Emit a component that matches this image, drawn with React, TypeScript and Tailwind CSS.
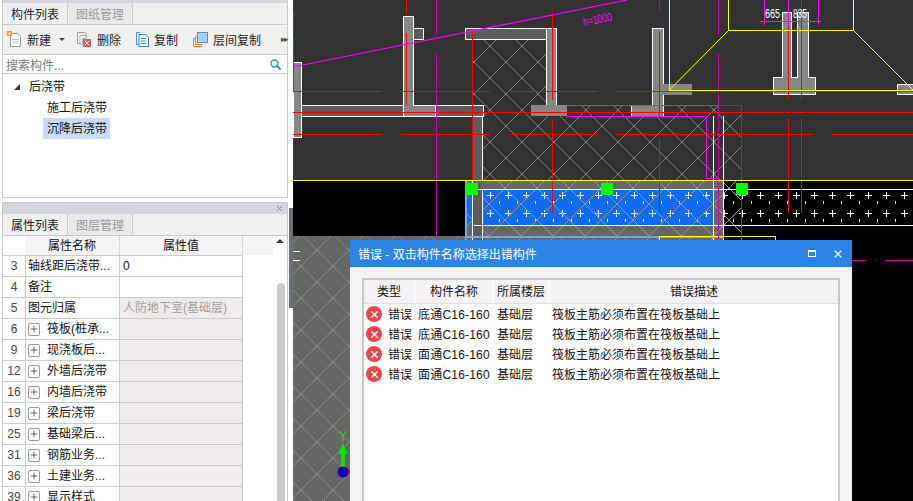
import { Plus, X } from "lucide-react";

const props = [
  { n: "3", name: "轴线距后浇带...", value: "0" },
  { n: "4", name: "备注", value: "" },
  { n: "5", name: "图元归属", value: "人防地下室(基础层)", muted: true },
  { n: "6", name: "筏板(桩承...", group: true },
  { n: "9", name: "现浇板后...", group: true },
  { n: "12", name: "外墙后浇带", group: true },
  { n: "16", name: "内墙后浇带", group: true },
  { n: "19", name: "梁后浇带", group: true },
  { n: "25", name: "基础梁后...", group: true },
  { n: "31", name: "钢筋业务...", group: true },
  { n: "36", name: "土建业务...", group: true },
  { n: "39", name: "显示样式", group: true },
];

const errors = ["底通C16-160", "底通C16-160", "面通C16-160", "面通C16-160"];

function NewIcon() {
  return (
    <svg width="15" height="17" viewBox="0 0 15 17" fill="none">
      <path d="M3.5 2.5h7l3 3v10h-10z" fill="#fff" stroke="#8d98a0" />
      <path d="M5.5 8.5h6M5.5 11h6" stroke="#b5bcc2" />
      <rect x="0" y="0" width="5" height="5" fill="#f59a23" />
      <path d="M1 2.5h3M2.5 1v3" stroke="#ffe0a8" />
    </svg>
  );
}

function DeleteIcon() {
  return (
    <svg width="15" height="15" viewBox="0 0 15 15" fill="none">
      <path d="M.5 .5h7l2 2v3M.5 .5v11h4" stroke="#9a9fa3" />
      <path d="M3 3.5h6v3H5.5v6H3z" fill="#fff" stroke="#b4b8bb" />
      <rect x="6" y="7" width="8" height="8" fill="#db5a5f" />
      <path d="M8 9l4 4M12 9l-4 4" stroke="#fff" />
    </svg>
  );
}

function CopyIcon() {
  return (
    <svg width="13" height="15" viewBox="0 0 13 15" fill="none">
      <path d="M.5 .5h3v1M.5 .5v12h2" stroke="#4a90d9" />
      <path d="M3 2.5h6l3.500 3v9H3z" fill="#fff" stroke="#2f86d8" />
      <path d="M5 6.500h5M5 9h5M5 11.500h5" stroke="#2f86d8" />
    </svg>
  );
}

function LayerIcon() {
  return (
    <svg width="15" height="15" viewBox="0 0 15 15" fill="none">
      <path d="M.5 14.500v-8h2M.5 14.500h8v-1M2.500 12.500v-8h1M2.500 12.500h7" stroke="#ee7b1c" />
      <rect x="4.500" y=".5" width="10" height="10" fill="#a9d0f7" stroke="#4a90d9" />
    </svg>
  );
}

function ToolButton({ w, icon, label }: { w: string; icon: React.ReactNode; label: string }) {
  return (
    <div className={`flex items-center gap-[5px] shrink-0 ${w}`}>
      {icon}
      <span className="whitespace-nowrap pt-[2px]">{label}</span>
    </div>
  );
}

function Tabs({ first, second }: { first: string; second: string }) {
  return (
    <div className="flex h-[22px] bg-[#f0f0f0] border-b border-[#c6cacc] text-[#222]">
      <div className="w-[65px] flex items-center justify-center pt-[2px] border-r border-[#c6cacc]">{first}</div>
      <div className="w-[65px] flex items-center justify-center pt-[2px] bg-[#ebe8ea] text-[#9a9a9a] border-r border-[#c6cacc]">
        {second}
      </div>
    </div>
  );
}

function CadCanvas() {
  return (
    <svg className="absolute inset-0" width="620" height="501" viewBox="293 0 620 501" shapeRendering="crispEdges">
      <defs>
        <pattern id="hatch" width="32" height="32" patternUnits="userSpaceOnUse" patternTransform="translate(506 30)">
          <path d="M0 0L32 32M32 0L0 32" stroke="#7f7f7f" fill="none" />
        </pattern>
        <pattern id="hatchBand" width="32" height="32" patternUnits="userSpaceOnUse" patternTransform="translate(585 204)">
          <path d="M0 0L32 32M32 0L0 32" stroke="#9c9484" fill="none" />
        </pattern>
        <pattern id="hatchLow" width="32" height="32" patternUnits="userSpaceOnUse" patternTransform="translate(317 410)">
          <path d="M0 0L32 32M32 0L0 32" stroke="#858785" fill="none" />
        </pattern>
        <pattern id="plus" width="18" height="18" patternUnits="userSpaceOnUse" patternTransform="translate(482 186)">
          <path d="M5 9h7M8.500 5.500v7M-4 18h7M-.5 14.500v7M14 18h7M17.500 14.500v7" stroke="#fff" fill="none" />
        </pattern>
      </defs>

      <rect x="293" y="0" width="620" height="181" fill="#333333" />
      <rect x="293" y="181" width="620" height="320" fill="#000" />
      <rect x="293" y="236" width="560" height="265" fill="#666865" />
      <rect x="293" y="236" width="560" height="265" fill="url(#hatchLow)" />
      <rect x="293" y="181" width="172" height="55" fill="#000" />
      <rect x="724" y="236" width="189" height="265" fill="#000" />

      {/* upper hatch */}
      <path d="M473 39H546V105H741V181H473Z" fill="url(#hatch)" />

      {/* walls */}
      <g stroke="#fff" strokeWidth="1">
        <path d="M293 62.500H301.500V137.500H293Z" fill="#858785" />
        <path d="M301 105.500H483V116.500H301Z" fill="#5c5c5c" />
        <path d="M413 28.500H423.500V39.500H413Z" fill="#5c5c5c" />
        <path d="M465.500 28.500H556V39.500H465.500Z" fill="#5c5c5c" />
        <path d="M472.500 116.500H482.500V181H472.500Z" fill="#5c5c5c" />
        <path d="M403 116.500V16.500H413.500V105.500H435V116.500Z" fill="#858785" />
        <path d="M546.500 105V28.500H556.500V105" fill="#858785" />
      </g>
      <rect x="531" y="105" width="36" height="11" fill="#858785" />
      <path d="M652.500 105V28.500H663.500V116.500H631V105H652.500Z" fill="#858785" stroke="#fff" />
      <rect x="663" y="84" width="29" height="11" fill="#858785" />
      <path d="M782 77V12.500H791.500V77H797V12.500H808V77H815.500V94.500H773.500V77Z" fill="#858785" stroke="#fff" />
      <path d="M913 84.500H897.500V94.500H913" fill="#858785" stroke="#fff" />

      {/* band under the slab */}
      <rect x="466" y="181" width="258" height="55" fill="#666865" />
      <rect x="482" y="190" width="231" height="35" fill="#116bf5" />
      <rect x="482" y="190" width="231" height="35" fill="url(#plus)" />
      <rect x="467" y="190" width="6" height="35" fill="#116bf5" />
      <rect x="724" y="190" width="189" height="35" fill="url(#plus)" />
      <rect x="466" y="181" width="275" height="55" fill="url(#hatchBand)" />
      <rect x="473" y="181" width="9" height="59" fill="#5c5c5c" />
      <path d="M473.500 189.500H913M473.500 225.500H913M482.500 189V240M472.500 181V240M713.500 116V240M723.500 116V240" stroke="#fff" fill="none" />
      <path d="M466 181V240M466 236.500H724" stroke="#78a5f0" strokeWidth="2" fill="none" />
      <path d="M659.500 240V236.500H775.500V240" stroke="#ffff00" fill="none" />

      {/* red axes */}
      <g stroke="#ff0000" fill="none">
        <path d="M293.500 12V91M293 91.500H382M400 91.500H490M508 91.500H598M616 91.500H913" />
        <path d="M293 112.500H913" />
        <path d="M293 134.500H382M401 134.500H490M509 134.500H598M617 134.500H813M832 134.500H913" />
        <path d="M406.500 0V14M406.500 33V105M472.500 30V180" />
        <path d="M552.500 12V100M552.500 119V213" />
        <path d="M659.500 0V12M659.500 32V118M659.500 139V213" />
        <path d="M788.500 0V100M788.500 119V213M801.500 0V100M801.500 119V213" />
        <path d="M718 105.500H741.500V240" />
      </g>

      {/* magenta lines */}
      <g stroke="#ff00ff" fill="none">
        <path d="M293 67L627 0" shapeRendering="auto" strokeWidth="1.200" />
        <path d="M567 105.500H718M567 116.500H706M706.500 116V178.500H718" />
        <path d="M760 21.500H821M764.500 0V25M788.500 0V25M818.500 0V25" />
      </g>
      <g stroke="#cc00aa" fill="none">
        <path d="M436.500 0V35M436.500 53V236M718.500 0V35M718.500 54V240" />
        <path d="M852 260.500H866M875 260.500H876M885 260.500H913" />
      </g>

      {/* yellow outline */}
      <g stroke="#ffff00" fill="none">
        <path d="M293 180.500H913" />
        <path d="M669.500 0V90.500H913M728.500 0V30.500H853.500V0" />
        <path d="M728.500 30.500L669.500 90M853.500 30.500L913 90" shapeRendering="auto" />
      </g>

      {/* grips */}
      <rect x="466" y="183" width="12" height="12" fill="#00ff00" />
      <rect x="601" y="183" width="12" height="12" fill="#00ff00" />
      <rect x="736" y="183" width="12" height="12" fill="#00ff00" />

      <text x="765" y="18" fill="#fff" fontSize="12" textLength="15" lengthAdjust="spacingAndGlyphs" fontFamily="Liberation Sans, sans-serif">665</text>
      <text x="793" y="18" fill="#fff" fontSize="12" textLength="14" lengthAdjust="spacingAndGlyphs" fontFamily="Liberation Sans, sans-serif">835</text>
      <text x="584" y="26" fill="#ff00ff" fontSize="12" textLength="29" lengthAdjust="spacingAndGlyphs" transform="rotate(-11 584 26)" fontFamily="Liberation Sans, sans-serif">h=1000</text>

      <path d="M293 251.500H300M293 260.500H300" stroke="#fff" />

      {/* axis marker */}
      <g shapeRendering="auto">
        <path d="M339.500 431L343 436L346.500 431M343 436V442" stroke="#33dd33" fill="none" />
        <path d="M343 443L348 454H345V467H341V454H338Z" fill="#00e600" />
        <circle cx="348" cy="472" r="2.500" fill="#ff0000" />
        <circle cx="343" cy="472" r="5.500" fill="#0000b8" />
      </g>
    </svg>
  );
}

export default function App() {
  return (
    <div className="relative flex w-[913px] h-[501px] overflow-hidden bg-white text-[12px] leading-none text-[#111] font-['Liberation_Sans','Noto_Sans_CJK_SC',sans-serif]">
      <aside className="relative w-[293px] shrink-0 flex flex-col pl-[2px] pr-[5px] bg-white">
        {/* component list */}
        <section className="h-[198px] shrink-0 flex flex-col border-x border-b border-[#c6cacc]">
          <div className="h-[3px] shrink-0 bg-[#d5d6dd]" />
          <Tabs first="构件列表" second="图纸管理" />
          <div className="h-[30px] shrink-0 flex items-center pl-[4px] bg-[#f0f0ee] border-b border-[#c6cacc] text-[#222]">
            <ToolButton w="w-[52px]" icon={<NewIcon />} label="新建" />
            <span className="w-0 h-0 mr-[12px] border-x-[3px] border-t-[3px] border-x-transparent border-t-[#444]" />
            <ToolButton w="w-[59px]" icon={<DeleteIcon />} label="删除" />
            <ToolButton w="w-[57px]" icon={<CopyIcon />} label="复制" />
            <ToolButton w="w-[88px]" icon={<LayerIcon />} label="层间复制" />
            <span className="text-[9px] tracking-[-2px] text-[#555]">▸▸</span>
          </div>
          <div className="h-[19px] shrink-0 flex items-center justify-between pl-[3px] pr-[6px] border-b border-[#c6cacc] text-[#777]">
            <span className="pt-[3px]">搜索构件...</span>
            <svg width="11" height="11" viewBox="0 0 11 11" fill="none">
              <circle cx="4.500" cy="4.500" r="3.500" stroke="#2b8fc9" strokeWidth="1.400" />
              <path d="M7 7l3.500 3.500" stroke="#2b6f9f" strokeWidth="1.600" />
            </svg>
          </div>
          <div className="flex-1 flex flex-col pt-[2px]">
            <div className="h-[21px] flex items-center pl-[11px] gap-[9px]">
              <svg width="6" height="6" viewBox="0 0 6 6">
                <path d="M6 0V6H0Z" fill="#333" />
              </svg>
              <span>后浇带</span>
            </div>
            <div className="h-[21px] flex items-center pl-[44px]">施工后浇带</div>
            <div className="h-[21px] flex items-center ml-[40px] w-[67px] pl-[4px] bg-[#cbdaf5]">沉降后浇带</div>
          </div>
        </section>

        {/* properties */}
        <section className="mt-[4px] flex-1 min-h-0 flex flex-col border-x border-t border-[#c6cacc]">
          <div className="h-[11px] shrink-0 flex items-center justify-end pr-[3px] bg-[#d5d6dd] text-[#777]">
            <X size={9} strokeWidth={2} />
          </div>
          <Tabs first="属性列表" second="图层管理" />
          <div className="relative flex-1 min-h-0 overflow-hidden">
            <div className="flex h-[19px] pr-[14px]">
              <div className="w-[22px] bg-white" />
              <div className="w-[95px] flex items-center justify-center bg-[#f5f2f6] border-r border-[#d5d5d8]">属性名称</div>
              <div className="w-[123px] flex items-center justify-center bg-[#f5f2f6] border-r border-[#d5d5d8]">属性值</div>
              <div className="flex-1 bg-[#f5f2f6]" />
            </div>
            {props.map((p) => (
              <div key={p.n} className="flex h-[21px] w-[240px] border-t border-[#c9cccc]">
                <div className="w-[22px] flex items-center justify-center text-[#444]">{p.n}</div>
                <div className="w-[95px] flex items-center border-x border-[#c9cccc] pl-[2px] whitespace-nowrap">
                  {p.group ? (
                    <>
                      <span className="w-[12px] h-[13px] mr-[7px] flex items-center justify-center border border-[#999] rounded-[2px] bg-white">
                        <Plus size={10} strokeWidth={1.500} />
                      </span>
                      {p.name}
                    </>
                  ) : (
                    p.name
                  )}
                </div>
                <div
                  className={`flex-1 flex items-center pl-[3px] border-r border-[#c9cccc] whitespace-nowrap ${
                    p.group || p.muted ? "bg-[#efeaec]" : "bg-white"
                  } ${p.muted ? "text-[#a0a0a0]" : ""}`}
                >
                  {p.value}
                </div>
              </div>
            ))}
            <span className="absolute right-[3px] top-[3px] w-0 h-0 border-x-[4px] border-b-[4px] border-x-transparent border-b-[#333]" />
            <div className="absolute right-[2px] top-[47px] bottom-0 w-[8px] rounded-t-[4px] bg-[#cccccc]" />
          </div>
        </section>
        <div className="absolute right-0 top-[208px] h-[100px] w-[4px] bg-[#6b6f7a]" />
      </aside>

      <main className="relative flex-1">
        <CadCanvas />

        {/* error dialog */}
        <div className="absolute left-[57px] top-[240px] w-[502px] h-[261px] flex flex-col bg-[#f5f2f6]">
          <div className="h-[27px] shrink-0 flex items-center justify-between pl-[8px] pr-[8px] bg-[#2b83e6] text-white">
            <span className="pt-[2px]">错误 - 双击构件名称选择出错构件</span>
            <div className="flex items-center gap-[16px]">
              <span className="w-[8px] h-[7px] border border-white border-t-2" />
              <X size={12} strokeWidth={2.500} />
            </div>
          </div>
          <div className="flex-1 min-h-0 mt-[11px] mx-[12px] flex flex-col bg-white border-x-2 border-t-2 border-[#c8c8c8]">
            <div className="h-[24px] shrink-0 flex gap-[2px] bg-[#f8f7f9] border-b border-[#e0e0e0]">
              <div className="w-[50px] flex items-center justify-center bg-[#f3f1f4]">类型</div>
              <div className="w-[76px] flex items-center justify-center bg-[#f3f1f4]">构件名称</div>
              <div className="w-[54px] flex items-center justify-center bg-[#f3f1f4]">所属楼层</div>
              <div className="flex-1 flex items-center justify-center bg-[#f3f1f4]">错误描述</div>
            </div>
            {errors.map((name, i) => (
              <div key={i} className="h-[20px] shrink-0 flex items-center">
                <span className="w-[16px] h-[16px] ml-[2px] mr-[6px] rounded-full bg-[#f04646] flex items-center justify-center text-white">
                  <X size={11} strokeWidth={3} />
                </span>
                <span className="w-[30px] pt-[2px]">错误</span>
                <span className="w-[79px] pt-[2px] tracking-[0.2px] whitespace-nowrap">{name}</span>
                <span className="w-[55px] pt-[2px]">基础层</span>
                <span className="pt-[2px] whitespace-nowrap">筏板主筋必须布置在筏板基础上</span>
              </div>
            ))}
          </div>
        </div>
      </main>
    </div>
  );
}
